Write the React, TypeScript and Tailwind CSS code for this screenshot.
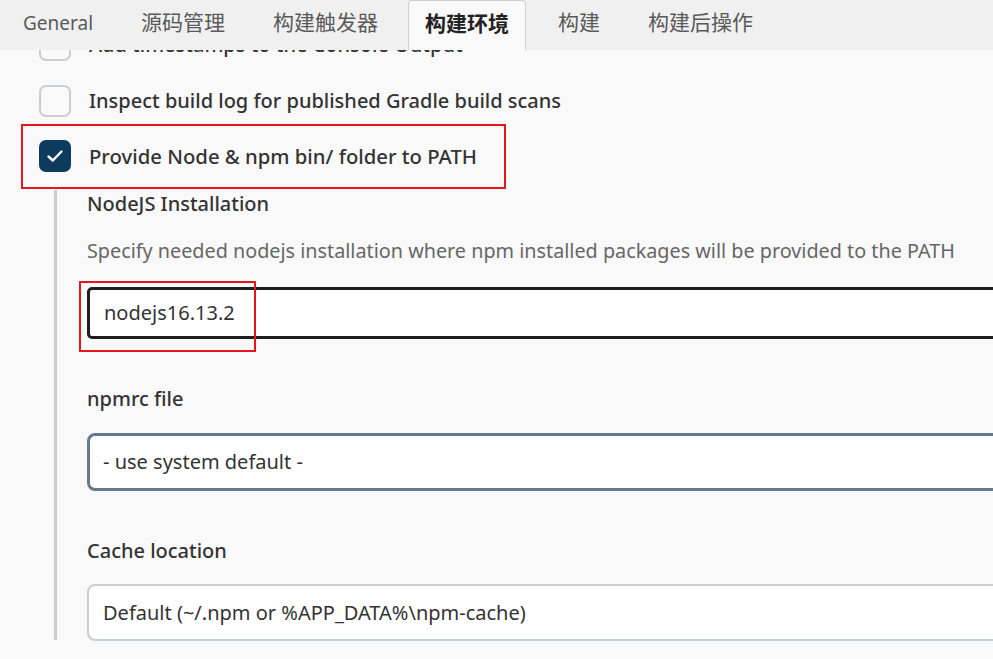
import React from "react";

const font = { fontFamily: '"Noto Sans", "Noto Sans CJK SC", sans-serif' };

function Tab({ label, active, cls }: { label: string; active?: boolean; cls: string }) {
  return active ? (
    <div className={"h-[50px] flex items-center bg-[#f9f9f9] border-x border-t border-[#cfcfcf] rounded-t-[4px] text-[21px] font-bold text-[#222] pb-[4px] " + cls}>
      {label}
    </div>
  ) : (
    <div className={"h-[50px] flex items-center text-[21px] text-[#5a5a5a] pb-[4px] " + cls}>{label}</div>
  );
}

function Box({ checked }: { checked?: boolean }) {
  return checked ? (
    <div className="w-[32px] h-[32px] rounded-[7px] bg-[#0d3b5e] flex items-center justify-center shrink-0">
      <svg width="20" height="20" viewBox="0 0 20 20" fill="none">
        <path d="M3.5 10.5 L7.8 14.5 L16.5 5.5" stroke="white" strokeWidth="2.4" strokeLinecap="round" strokeLinejoin="round" />
      </svg>
    </div>
  ) : (
    <div className="w-[32px] h-[32px] rounded-[7px] border-[2px] border-[#c9ced2] bg-[#fafafa] shrink-0" />
  );
}

export default function App() {
  return (
    <div className="w-[993px] h-[659px] overflow-hidden bg-[#f9f9f9] flex flex-col" style={font}>
      <div className="h-[50px] bg-[#f0f0f0] flex items-end shrink-0">
        <div className="h-[50px] flex items-center text-[19px] text-[#5a5a5a] pb-[4px] pl-[23px] pr-[48px]">General</div>
        <Tab label="源码管理" cls="pr-[48px]" />
        <Tab label="构建触发器" cls="pr-[30px]" />
        <Tab label="构建环境" active cls="px-[16px]" />
        <Tab label="构建" cls="pl-[32px] pr-[48px]" />
        <Tab label="构建后操作" cls="" />
      </div>
      <div className="flex-1 overflow-hidden">
        <div className="mt-[-21px] pl-[39px]">
          <div className="flex items-center gap-[18px] h-[32px]">
            <Box />
            <span className="text-[20px] font-medium text-[#333]">Add timestamps to the Console Output</span>
          </div>
          <div className="flex items-center gap-[18px] h-[32px] mt-[24px]">
            <Box />
            <span className="text-[20px] font-medium text-[#333]">Inspect build log for published Gradle build scans</span>
          </div>
          <div className="relative mt-[23px]">
            <div className="absolute left-[-18px] top-[-16px] w-[485px] h-[65px] border-2 border-[#e8161b] pointer-events-none" />
            <div className="flex items-center gap-[18px] h-[32px]">
              <Box checked />
              <span className="text-[20.3px] font-medium text-[#333]">Provide Node &amp; npm bin/ folder to PATH</span>
            </div>
          </div>
          <div className="flex mt-[18px]">
            <div className="w-[3px] h-[450px] bg-[#c7cfd5] ml-[15px] shrink-0" />
            <div className="pl-[30px] flex-1">
              <div className="text-[20px] font-medium text-[#333] leading-[28px]">NodeJS Installation</div>
              <div className="text-[19.8px] text-[#666] leading-[28px] mt-[19px] whitespace-nowrap">
                Specify needed nodejs installation where npm installed packages will be provided to the PATH
              </div>
              <div className="relative mt-[22px]">
                <div className="absolute left-[-8px] top-[-6px] w-[177px] h-[71px] border-2 border-[#e8161b] z-10 pointer-events-none" />
                <div className="w-[1000px] h-[52px] rounded-[5px] border-[3px] border-[#1e1e1e] bg-white flex items-center pl-[14px] text-[20px] text-[#333]">
                  nodejs16.13.2
                </div>
              </div>
              <div className="text-[20px] font-medium text-[#333] leading-[28px] mt-[46px]">npmrc file</div>
              <div className="w-[1000px] h-[58px] rounded-[8px] border-[3px] border-[#667b89] bg-white flex items-center pl-[13px] text-[20px] text-[#333] mt-[20px]">
                - use system default -
              </div>
              <div className="text-[20px] font-medium text-[#333] leading-[28px] mt-[46px]">Cache location</div>
              <div className="w-[1000px] h-[57px] rounded-[8px] border-[2px] border-[#c9ced2] bg-white flex items-center pl-[14px] text-[20px] text-[#333] mt-[19px]">
                Default (~/.npm or %APP_DATA%\npm-cache)
              </div>
            </div>
          </div>
        </div>
      </div>
    </div>
  );
}
